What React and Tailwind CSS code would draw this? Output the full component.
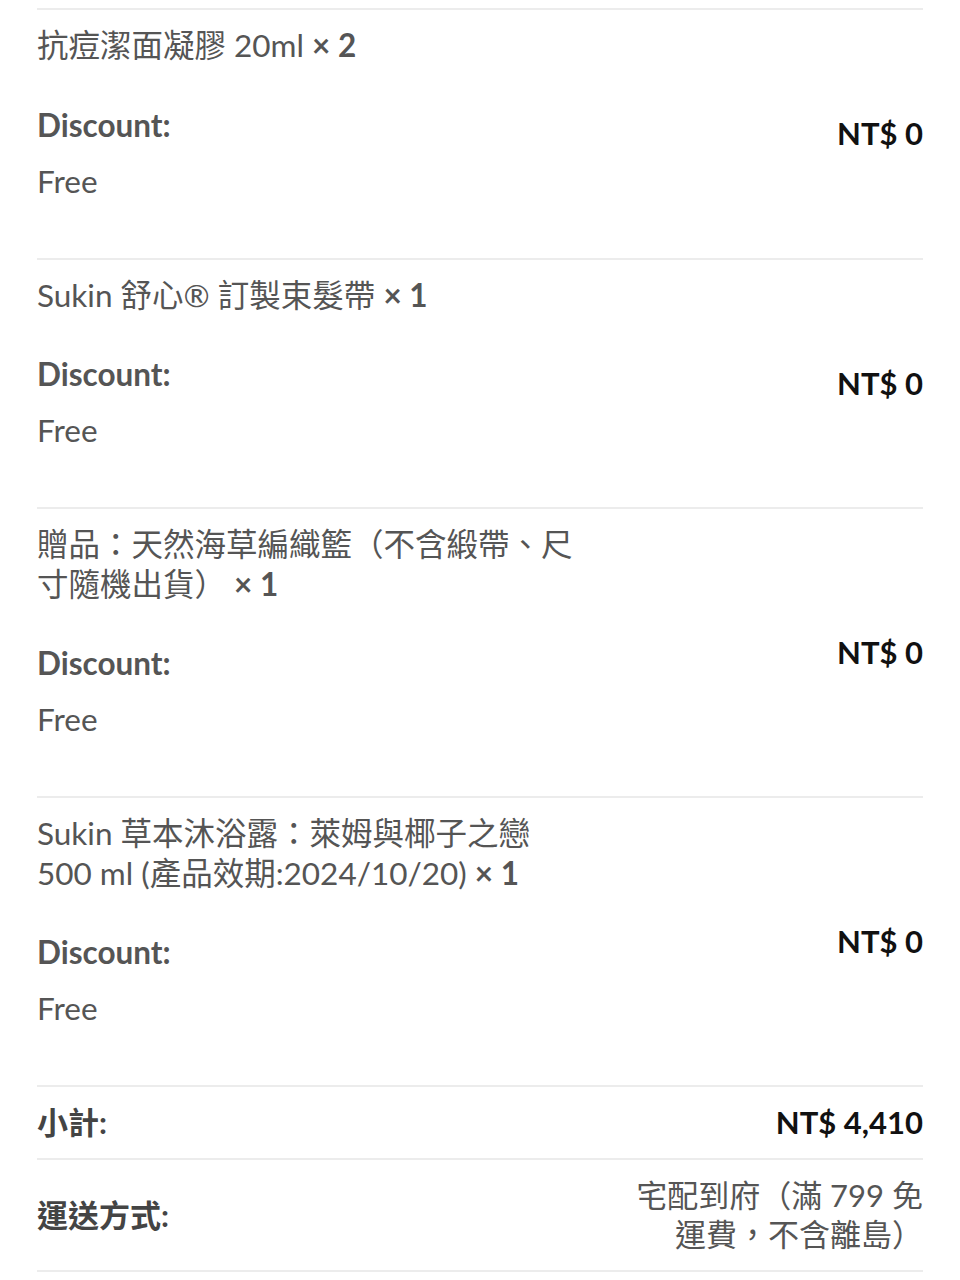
import React from "react";

const font = { fontFamily: "Lato, 'Noto Sans CJK TC', sans-serif" };

function Item({ name, qty }) {
  return (
    <div className="flex items-center justify-between border-t-2 border-[#ececec] pt-4 pb-[57px]">
      <div className="w-[545px]">
        <div className="text-[31.5px] leading-[39.5px] text-[#555]">
          {name} <span className="font-bold">× {qty}</span>
        </div>
        <div className="mt-10 text-[31.5px] leading-[39px] font-bold text-[#555]">Discount:</div>
        <div className="mt-[17px] text-[31.5px] leading-[39px] text-[#555]">Free</div>
      </div>
      <div className="text-[31px] leading-[39px] font-bold text-[#111] -mb-[57px] -mt-4">NT$ 0</div>
    </div>
  );
}

export default function App() {
  return (
    <div className="bg-white min-h-[1280px] px-[37px] pt-2" style={font}>
      <Item name="抗痘潔面凝膠 20ml" qty="2" />
      <Item name="Sukin 舒心® 訂製束髮帶" qty="1" />
      <Item name="贈品：天然海草編織籃（不含緞帶、尺寸隨機出貨）" qty="1" />
      <Item name="Sukin 草本沐浴露：萊姆與椰子之戀 500 ml (產品效期:2024/10/20)" qty="1" />
      <div className="flex items-center justify-between border-t-2 border-[#ececec] py-4">
        <div className="text-[31px] leading-[39px] font-bold text-[#444]">小計:</div>
        <div className="text-[31px] leading-[39px] font-bold text-[#111]">NT$ 4,410</div>
      </div>
      <div className="flex items-center justify-between border-t-2 border-b-2 border-[#ececec] py-4">
        <div className="text-[31px] leading-[39px] font-bold text-[#444]">運送方式:</div>
        <div className="w-[300px] text-right text-[31px] leading-[39px] text-[#555]">
          宅配到府（滿 799 免運費，不含離島）
        </div>
      </div>
    </div>
  );
}
